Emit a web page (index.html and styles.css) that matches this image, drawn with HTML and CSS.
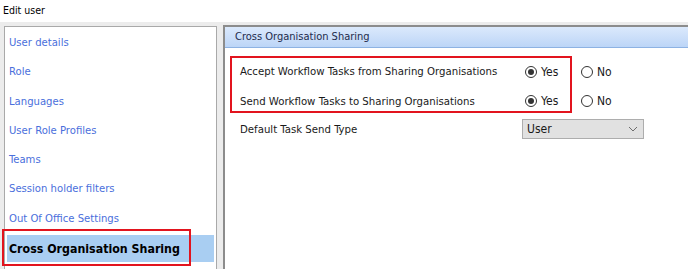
FILE: index.html
```html
<!DOCTYPE html>
<html lang="en">
<head>
    <meta charset="UTF-8">
    <title>Edit user</title>
    <link rel="stylesheet" href="styles.css">
</head>
<body>
    <div class="title">Edit user</div>
    <div class="main">
        <div class="nav">
            <div class="nav-item">User details</div>
            <div class="nav-item">Role</div>
            <div class="nav-item">Languages</div>
            <div class="nav-item">User Role Profiles</div>
            <div class="nav-item">Teams</div>
            <div class="nav-item">Session holder filters</div>
            <div class="nav-item">Out Of Office Settings</div>
            <div class="nav-item selected">Cross Organisation Sharing</div>
            <div class="highlight nav-mark"></div>
        </div>
        <div class="panel">
            <div class="panel-header">Cross Organisation Sharing</div>
            <div class="sharing-box">
                <div class="row">
                    <div class="label">Accept Workflow Tasks from Sharing Organisations</div>
                    <div class="radio checked"></div><span class="opt yes">Yes</span>
                    <div class="radio"></div><span class="opt">No</span>
                </div>
                <div class="row">
                    <div class="label">Send Workflow Tasks to Sharing Organisations</div>
                    <div class="radio checked"></div><span class="opt yes">Yes</span>
                    <div class="radio"></div><span class="opt">No</span>
                </div>
            </div>
            <div class="row send-type">
                <div class="label">Default Task Send Type</div>
                <div class="select">
                    <span>User</span>
                    <svg width="10" height="6" viewBox="0 0 10 6"><path d="M1 1 L5 5 L9 1" fill="none" stroke="#6d6d6d" stroke-width="1"/></svg>
                </div>
            </div>
        </div>
    </div>
</body>
</html>
```

FILE: styles.css
```css
body {
    margin: 0;
    font-family: "DejaVu Sans Condensed", "DejaVu Sans", sans-serif;
    font-stretch: condensed;
    font-size: 11px;
    color: #1a1a1a;
    background: #ffffff;
    overflow: hidden;
}
.title {
    height: 22px;
    line-height: 20px;
    padding-left: 3px;
    font-size: 10.5px;
    color: #000000;
}
.main {
    display: flex;
    height: 247px;
    background: #ececec;
    padding: 4px 0 0 4px;
    box-sizing: border-box;
}
.nav {
    position: relative;
    width: 213px;
    background: #ffffff;
    border: 1px solid #a9a9a9;
    border-bottom: none;
    box-sizing: border-box;
    padding: 1px 2px 0 2px;
}
.nav-item {
    height: 29.3px;
    line-height: 29px;
    padding-left: 2px;
    color: #4a6fdc;
    font-size: 11.2px;
    white-space: nowrap;
}
.nav-item.selected {
    margin-top: 2px;
    height: 27px;
    line-height: 28px;
    background: #a9cef2;
    color: #000000;
    font-weight: bold;
    font-size: 12.3px;
}
.highlight {
    position: absolute;
    border: 2px solid #e2141e;
}
.nav-mark {
    left: -3px;
    top: 202px;
    width: 185px;
    height: 33px;
}
.panel {
    flex: 1;
    margin-left: 6px;
    margin-top: -1px;
    background: #ffffff;
    border-left: 2px solid #8c8c8c;
    border-top: 2px solid #8c8c8c;
}
.panel-header {
    height: 20px;
    line-height: 20px;
    padding-left: 10px;
    background: linear-gradient(#dbe9fc, #bcd5f7);
    border-bottom: 1px solid #8db2e3;
    color: #1e2b4c;
    white-space: nowrap;
}
.sharing-box {
    margin: 8px 0 0 5px;
    width: 342px;
    height: 57px;
    border: 2px solid #e2141e;
    box-sizing: border-box;
    padding: 4px 0 0 8px;
    display: flex;
    flex-direction: column;
    gap: 9px;
}
.row {
    display: flex;
    align-items: center;
    height: 20px;
    white-space: nowrap;
}
.label {
    width: 285px;
    flex: none;
    font-size: 11.3px;
}
.radio {
    width: 10px;
    height: 10px;
    border: 1px solid #333333;
    border-radius: 50%;
    background: #ffffff;
    position: relative;
    flex: none;
}
.radio.checked::after {
    content: "";
    position: absolute;
    left: 2px;
    top: 2px;
    width: 6px;
    height: 6px;
    border-radius: 50%;
    background: #333333;
}
.opt {
    margin-left: 4px;
    font-size: 12px;
}
.opt.yes {
    width: 40px;
    flex: none;
}
.sharing-box .row + .row {
    margin-top: 1px;
}
.send-type {
    margin: 6px 0 0 15px;
}
.select {
    margin-left: -3px;
    width: 122px;
    height: 20px;
    box-sizing: border-box;
    border: 1px solid #adadad;
    background: #e1e1e1;
    display: flex;
    align-items: center;
    justify-content: space-between;
    padding: 0 5px 0 4px;
    font-size: 12px;
}
```
